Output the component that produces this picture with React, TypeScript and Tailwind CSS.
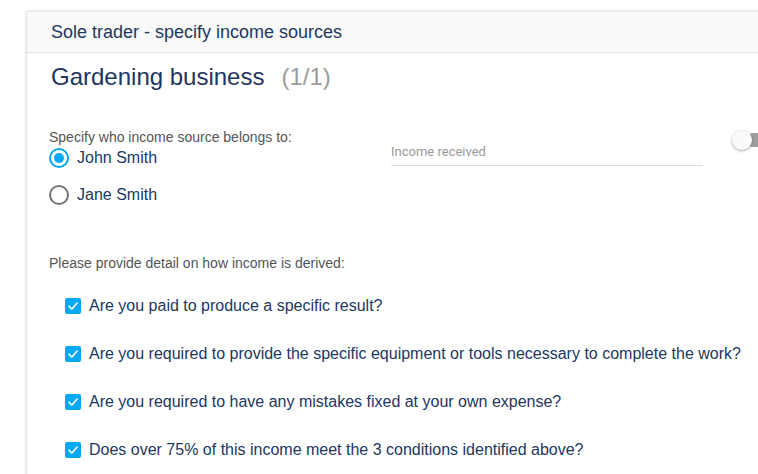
import React from "react";

const items = [
  "Are you paid to produce a specific result?",
  "Are you required to provide the specific equipment or tools necessary to complete the work?",
  "Are you required to have any mistakes fixed at your own expense?",
  "Does over 75% of this income meet the 3 conditions identified above?",
];

function Check() {
  return (
    <span className="flex h-[16px] w-[16px] shrink-0 items-center justify-center rounded-[2px] bg-[#03a9f4]">
      <svg width="12" height="12" viewBox="0 0 12 12" fill="none">
        <path d="M2 6.2 L4.8 9 L10 3.2" stroke="white" strokeWidth="1.6" strokeLinecap="round" strokeLinejoin="round" />
      </svg>
    </span>
  );
}

export default function App() {
  return (
    <div className="h-[474px] w-[758px] overflow-hidden bg-white pl-[26px] pt-[11px]" style={{ fontFamily: '"Liberation Sans", Arial, sans-serif' }}>
      <div className="h-[600px] w-[760px] border-l border-t border-[#e6e6e6] bg-white shadow-[0_0_4px_rgba(0,0,0,0.12)]">
        <div className="flex h-[41px] items-center border-b border-[#e3e3e3] bg-[#f9f9f9] pl-[24px] text-[18px] leading-[20px] text-[#22375e]">
          Sole trader - specify income sources
        </div>
        <div className="pl-[24px] pt-[10px]">
          <div className="flex h-[28px] items-center text-[24px] leading-[28px] text-[#1f3560]">
            <span>Gardening business</span>
            <span className="ml-[17px] text-[#9b9b9b]">(1/1)</span>
          </div>
          <div className="mt-[38px] flex items-start">
            <div className="w-[340px]">
              <div className="-ml-[2px] text-[14px] leading-[16px] text-[#555]">Specify who income source belongs to:</div>
              <div className="-ml-[2px] mt-[3px] flex h-[20px] items-center gap-[8px]">
                <span className="flex h-[20px] w-[20px] items-center justify-center rounded-full border-2 border-[#03a9f4]">
                  <span className="h-[10px] w-[10px] rounded-full bg-[#03a9f4]" />
                </span>
                <span className="text-[16px] leading-[20px] text-[#22375e]">John Smith</span>
              </div>
              <div className="-ml-[2px] mt-[17px] flex h-[20px] items-center gap-[8px]">
                <span className="h-[20px] w-[20px] rounded-full border-2 border-[#757575]" />
                <span className="text-[16px] leading-[20px] text-[#22375e]">Jane Smith</span>
              </div>
            </div>
            <div
              className="h-[37px] w-[312px] border-b border-[#dcdcdc] pt-[15px] text-[13px] leading-[16px] text-[#9a9a9a]"
              style={{ fontFamily: "Roboto, sans-serif" }}
            >
              Income received
            </div>
            <div className="relative ml-[29px] mt-[1px] h-[20px] w-[40px]">
              <span className="absolute left-[14px] top-[3px] h-[14px] w-[30px] rounded-full bg-[#9e9e9e]" />
              <span className="absolute left-0 top-0 h-[20px] w-[20px] rounded-full bg-[#fafafa] shadow-[0_1px_3px_rgba(0,0,0,0.35)]" />
            </div>
          </div>
          <div className="-ml-[2px] mt-[50px] text-[14px] leading-[16px] text-[#555]">Please provide detail on how income is derived:</div>
          <div className="ml-[14px] mt-[25px] flex flex-col gap-[28px]">
            {items.map((t) => (
              <div key={t} className="flex h-[20px] items-center gap-[8px]">
                <Check />
                <span className="text-[16px] leading-[20px] text-[#22375e]">{t}</span>
              </div>
            ))}
          </div>
        </div>
      </div>
    </div>
  );
}
